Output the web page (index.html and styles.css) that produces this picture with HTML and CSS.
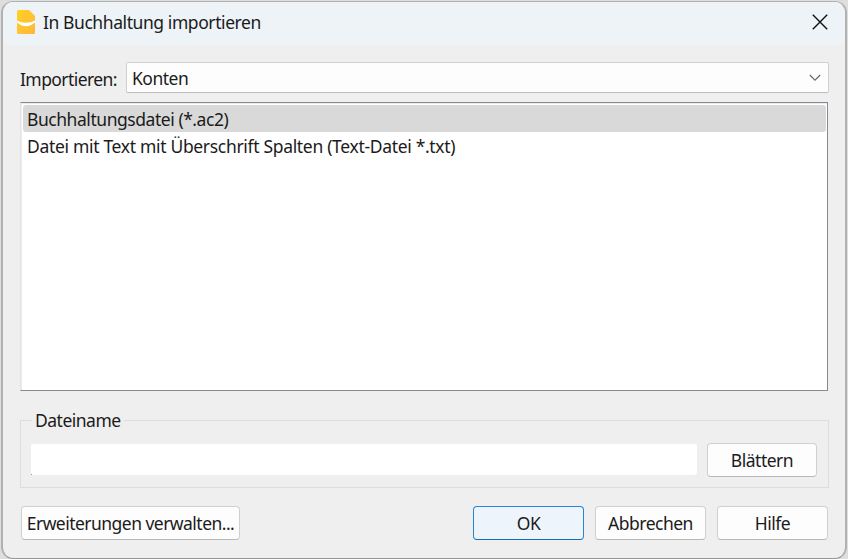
FILE: index.html
```
<!DOCTYPE html>
<html lang="de">
<head>
<meta charset="utf-8">
<title>In Buchhaltung importieren</title>
<link rel="stylesheet" href="styles.css">
</head>
<body>
<main class="dialog">
  <header class="titlebar">
    <svg class="app-icon" width="18" height="24" viewBox="0 0 18 24">
      <defs><linearGradient id="g" x1="0" y1="0" x2="1" y2="1"><stop offset="0" stop-color="#ffd21f"/><stop offset="1" stop-color="#ffb53f"/></linearGradient></defs>
      <path fill="url(#g)" d="M1.500 0H12l6 6v16.500q0 1.500-1.500 1.500h-15Q0 24 0 22.500V1.500Q0 0 1.500 0Z"/>
      <path fill="#fff" d="M0 10.500Q4 12.800 9 12.800t9-2.300v2Q14 16.200 9 16.200T0 12.500Z"/>
    </svg>
    <h1 class="title">In Buchhaltung importieren</h1>
    <svg class="close" width="16" height="16" viewBox="0 0 16 16"><path d="M.8.800 15.200 15.200M15.200.8.800 15.200" fill="none" stroke="#111" stroke-width="1.400"/></svg>
  </header>
  <section class="content">
    <div class="import-row">
      <label class="import-label">Importieren:</label>
      <div class="combo"><span>Konten</span>
        <svg width="12" height="8" viewBox="0 0 12 8"><path d="M.8 1 6 6.200 11.200 1" fill="none" stroke="#686868" stroke-width="1.200"/></svg>
      </div>
    </div>
    <ul class="list">
      <li class="item selected">Buchhaltungsdatei (*.ac2)</li>
      <li class="item wide">Datei mit Text mit Überschrift Spalten (Text-Datei *.txt)</li>
    </ul>
    <div class="group">
      <span class="legend">Dateiname</span>
      <input class="filename" type="text" aria-label="Dateiname">
      <button class="btn">Blättern</button>
    </div>
    <footer class="actions">
      <button class="btn manage">Erweiterungen verwalten...</button>
      <button class="btn action primary">OK</button>
      <button class="btn action">Abbrechen</button>
      <button class="btn action">Hilfe</button>
    </footer>
  </section>
</main>
</body>
</html>
```
FILE: styles.css
```
* { box-sizing: border-box; }
body {
  margin: 0;
  height: 559px;
  padding: 1px 1px 0;
  overflow: hidden;
  background: #dedede;
  color: #1b1b1b;
  font: 17.5px/24px "Noto Sans", "Open Sans", sans-serif;
  letter-spacing: -0.5px;
  white-space: nowrap;
}
.dialog {
  height: 558px;
  border: 2px solid #b1b1b1;
  border-top-width: 1px;
  border-bottom: 1px solid #969696;
  border-radius: 12px;
  background: #efefef;
  overflow: hidden;
}
.titlebar {
  height: 43px;
  padding: 0 17px 3px 14px;
  display: flex;
  align-items: center;
  background: #eef3f8;
}
.title { margin: 0 auto 0 8px; font: inherit; letter-spacing: -0.42px; }
.content { padding: 17px 16px 0 17px; }
.import-row { display: flex; height: 31px; align-items: center; }
.import-label { width: 106px; padding-top: 2px; letter-spacing: -0.58px; }
.combo {
  flex: 1;
  height: 31px;
  padding: 1px 7px 0 5px;
  display: flex;
  align-items: center;
  justify-content: space-between;
  background: #fdfdfd;
  border: 1px solid #d0d0d0;
  border-bottom-color: #bdbdbd;
  border-radius: 2px;
}
.list {
  list-style: none;
  height: 289px;
  margin: 9px 1px 0 0;
  padding: 2px 1px 2px 2px;
  background: #fff;
  border: 1px solid #868b93;
  border-left-color: #e4e4e4;
  box-shadow: inset 1px 1px #ececec;
}
.item { height: 27px; padding: 1px 4px 0; line-height: 27px; letter-spacing: -0.45px; }
.selected { background: #d9d9d9; border-radius: 3px; }
.wide { letter-spacing: -0.32px; }
.group {
  position: relative;
  display: flex;
  height: 68px;
  margin-top: 29px;
  padding: 22px 11px 0 10px;
  border: 1px solid #dcdcdc;
}
.legend {
  position: absolute;
  left: 11px;
  top: -13px;
  padding: 0 3px;
  background: #efefef;
}
.filename {
  flex: 1;
  min-width: 0;
  height: 31px;
  margin: 1px 10px 0 0;
  border: 0;
  border-radius: 2px;
  background: linear-gradient(#999, #999) left bottom / 1px 1px no-repeat #fff;
  border-bottom-left-radius: 0;
}
.btn {
  width: 110px;
  height: 34px;
  padding: 0 0 1px;
  font: inherit;
  letter-spacing: inherit;
  color: inherit;
  background: #fdfdfd;
  border: 1px solid #d0d0d0;
  border-bottom-color: #b9b9b9;
  border-radius: 4px;
}
.actions { display: flex; gap: 11px; margin: 18px 1px 0; }
.manage { width: 219px; margin-right: auto; letter-spacing: -0.53px; }
.action { width: 111px; }
.primary { background: #eef4fb; border-color: #2585d5; border-bottom-color: #196cb2; }
```
